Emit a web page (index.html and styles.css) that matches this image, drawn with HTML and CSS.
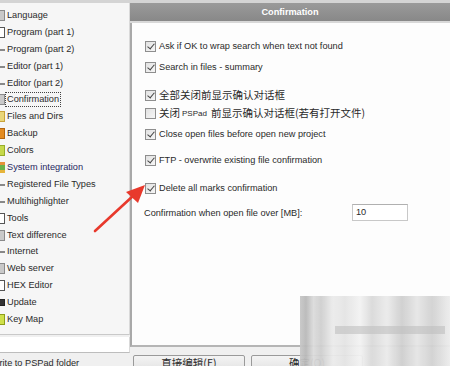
FILE: index.html
```html
<!DOCTYPE html>
<html>
	<head>
		<meta charset="UTF-8">
		<title>Settings</title>
		<link rel="stylesheet" href="styles.css">
	</head>
	<body>
		<div class="window">
			<div class="side">
				<ul class="tree">
					<li><i class="ico ico-gray"></i>Language</li>
					<li><i class="ico ico-box"></i>Program (part 1)</li>
					<li><i class="ico ico-dash"></i>Program (part 2)</li>
					<li><i class="ico ico-dash"></i>Editor (part 1)</li>
					<li><i class="ico ico-dash"></i>Editor (part 2)</li>
					<li class="sel"><i class="ico ico-gray"></i><span>Confirmation</span></li>
					<li><i class="ico ico-yellow"></i>Files and Dirs</li>
					<li><i class="ico ico-orange"></i>Backup</li>
					<li><i class="ico ico-lime"></i>Colors</li>
					<li class="hot"><i class="ico ico-multi"></i>System integration</li>
					<li><i class="ico ico-dash"></i>Registered File Types</li>
					<li><i class="ico ico-dash"></i>Multihighlighter</li>
					<li><i class="ico ico-box"></i>Tools</li>
					<li><i class="ico ico-gray"></i>Text difference</li>
					<li><i class="ico ico-dash"></i>Internet</li>
					<li><i class="ico ico-gray"></i>Web server</li>
					<li><i class="ico ico-box"></i>HEX Editor</li>
					<li><i class="ico ico-dark"></i>Update</li>
					<li><i class="ico ico-key"></i>Key Map</li>
				</ul>
				<div class="search"></div>
				<div class="note">Write to PSPad folder</div>
			</div>
			<div class="main">
				<div class="title">Confirmation</div>
				<div class="panel">
					<label class="row r1"><i class="chk on"></i>Ask if OK to wrap search when text not found</label>
					<label class="row r2"><i class="chk on"></i>Search in files - summary</label>
					<label class="row r3 cjk"><i class="chk on"></i>全部关闭前显示确认对话框</label>
					<label class="row r4 cjk"><i class="chk"></i>关闭 <small>PSPad</small> 前显示确认对话框(若有打开文件)</label>
					<label class="row r5"><i class="chk on"></i>Close open files before open new project</label>
					<label class="row r6"><i class="chk on"></i>FTP - overwrite existing file confirmation</label>
					<label class="row r7"><i class="chk on"></i>Delete all marks confirmation</label>
					<div class="row r8">
						<span class="lbl">Confirmation when open file over [MB]:</span>
						<span class="field">10</span>
					</div>
				</div>
				<div class="buttons">
					<span class="btn">直接编辑(E)</span>
					<span class="btn">确定(O)</span>
				</div>
			</div>
		</div>

		<div class="blur"></div>

		<svg class="arrow" width="450" height="366" viewBox="0 0 450 366">
			<line x1="95" y1="231" x2="134" y2="195" stroke="#e8392c" stroke-width="2.6" stroke-linecap="round" />
			<polygon points="145,185 126,192 138,203" fill="#e8392c" />
		</svg>
	</body>
</html>
```

FILE: styles.css
```css
* {
	margin: 0;
	padding: 0;
	list-style: none;
	box-sizing: border-box;
}

body {
	width: 450px;
	height: 366px;
	overflow: hidden;
	background: #f0f0f0;
	font: 9.2px/14px "Liberation Sans", Arial, "Noto Sans CJK SC", sans-serif;
	color: #2a2a2a;
	position: relative;
}

.window {
	display: flex;
	height: 366px;
	border-top: 3px solid #d4d4d4;
}

/* left tree */
.side {
	width: 130px;
	flex: none;
	display: flex;
	flex-direction: column;
}

.tree {
	height: 332px;
	flex: none;
	background: #f6f6f6;
	border-right: 1px solid #d9d9d9;
	border-bottom: 1px solid #c9c9c9;
	padding-top: 4px;
}

.tree li {
	height: 16.9px;
	line-height: 16.9px;
	display: flex;
	align-items: center;
	white-space: nowrap;
}

.tree li.sel span {
	outline: 1px dotted #444;
	padding: 0 1px;
	line-height: 13px;
	margin-left: -1px;
}

.tree li.hot {
	color: #26275e;
}

.ico {
	width: 5px;
	height: 11px;
	margin-right: 2px;
	flex: none;
	border: 1px solid #8a8a8a;
	border-left: none;
	background: #eee;
}

.ico-gray { background: #c9c9c9; }
.ico-box { background: #fff; border-color: #555; }
.ico-dash { border: none; background: linear-gradient(#f6f6f6 45%, #888 45%, #888 60%, #f6f6f6 60%); }
.ico-yellow { background: #e9d679; border-color: #c9a33a; }
.ico-orange { background: #e38b21; border-color: #b26510; }
.ico-lime { background: #c6d94a; border-color: #97ac2a; }
.ico-multi { background: linear-gradient(#e6923a 30%, #6bb24a 30%, #6bb24a 70%, #e6b43a 70%); border: none; }
.ico-dark { background: #333; border-color: #222; height: 7px; }
.ico-key { background: #cfe04a; border-color: #8e9e1a; }

.search {
	height: 16px;
	flex: none;
	margin-top: 2px;
	background: #fff;
	border-bottom: 1px solid #bdbdbd;
	border-right: 1px solid #d9d9d9;
}

.note {
	margin-top: 3px;
	margin-left: -9px;
	white-space: nowrap;
}

/* right side */
.main {
	flex: 1;
	display: flex;
	flex-direction: column;
}

.title {
	height: 20px;
	flex: none;
	line-height: 19px;
	background: linear-gradient(#9a9a9a, #888);
	border-bottom: 2px solid #d8d8d8;
	color: #fff;
	font-weight: bold;
	text-align: center;
}

.panel {
	height: 324px;
	flex: none;
	background: #fdfdfd;
	border-left: 2px solid #a9a9a9;
	border-bottom: 2px solid #b5b5b5;
	padding: 16px 0 0 13px;
	display: flex;
	flex-direction: column;
}

.row {
	display: flex;
	align-items: center;
	height: 14px;
	white-space: nowrap;
}

.r2 { margin-top: 7px; }
.r3 { margin-top: 14px; }
.r4 { margin-top: 4px; }
.r5 { margin-top: 7px; }
.r6 { margin-top: 12px; }
.r7 { margin-top: 14px; }
.r8 { margin-top: 9px; height: 17px; margin-left: -1px; }

.cjk {
	font-size: 10.5px;
	font-family: "Noto Sans CJK SC", sans-serif;
}

.cjk small {
	font: 8px "Liberation Sans", sans-serif;
	margin: 0 4px 0 2px;
}

.chk {
	width: 11px;
	height: 11px;
	margin-right: 3px;
	border: 1px solid #8e8e8e;
	background: linear-gradient(135deg, #e2e2e2, #f6f6f6);
	position: relative;
	flex: none;
}

.chk.on::after {
	content: "";
	position: absolute;
	left: 3px;
	top: 0;
	width: 3px;
	height: 6px;
	border: solid #444;
	border-width: 0 1.4px 1.4px 0;
	transform: rotate(40deg);
}

.lbl {
	width: 208px;
}

.field {
	width: 56px;
	height: 17px;
	line-height: 15px;
	border: 1px solid #c8c8c8;
	border-top-color: #b0b0b0;
	background: #fff;
	padding-left: 3px;
}

.buttons {
	display: flex;
	gap: 6px;
	padding: 8px 0 0 3px;
	font: 10.5px/14px "Noto Sans CJK SC", sans-serif;
}

.btn {
	height: 20px;
	width: 112px;
	flex: none;
	border: 1px solid #9a9a9a;
	border-radius: 2px;
	background: linear-gradient(#f4f4f4, #dedede);
	text-align: center;
	line-height: 14px;
}

/* mosaic watermark in the corner */
.blur {
	position: absolute;
	left: 300px;
	top: 296px;
	width: 150px;
	height: 70px;
	background:
		linear-gradient(90deg, #c8c8c8 0, #b9b9b9 4%, #dcdcdc 9%, #cfcfcf 14%, #ececec 22%, #e4e4e4 30%, #f3f3f3 40%, #dadada 48%, #ebebeb 58%, #cfcfcf 68%, #e6e6e6 78%, #d2d2d2 88%, #ededed 100%);
	opacity: 0.95;
}

.blur::after {
	content: "";
	position: absolute;
	left: 35px;
	top: 30px;
	width: 110px;
	height: 8px;
	background: #bdbdbd;
	opacity: 0.6;
}

.arrow {
	position: absolute;
	left: 0;
	top: 0;
	pointer-events: none;
}
```
